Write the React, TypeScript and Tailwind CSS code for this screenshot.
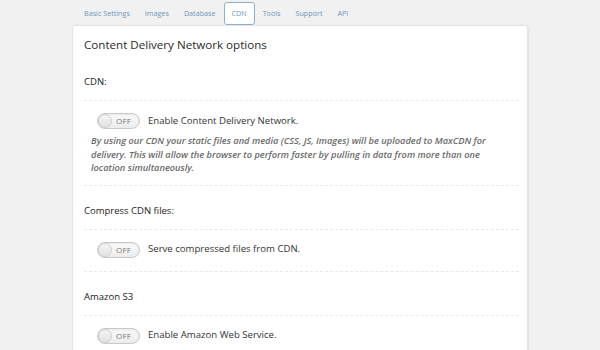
const tabs = ["Basic Settings", "Images", "Database", "CDN", "Tools", "Support", "API"];

function Toggle() {
  return (
    <div className="flex h-[16px] w-[43px] shrink-0 items-center rounded-full border border-[#c9c9c9] bg-gradient-to-b from-[#fafafa] to-[#ececec] shadow-[inset_0_1px_2px_rgba(0,0,0,0.08)]">
      <div className="h-[14px] w-[14px] rounded-full border border-[#cfcfcf] bg-gradient-to-b from-[#f4f4f4] to-[#e2e2e2]" />
      <span className="ml-[4px] text-[8px] leading-none tracking-[0.02em] text-[#777]">OFF</span>
    </div>
  );
}

function Separator() {
  return <div className="border-t border-dashed border-[#e9e9e9]" />;
}

function Header({ children }: { children: string }) {
  return <div className="pb-[10px] pt-[17px] text-[9.5px] leading-[16px] text-[#222]">{children}</div>;
}

function ToggleRow({ label }: { label: string }) {
  return (
    <div className="flex h-[18px] items-center gap-[8px] pl-[13px]">
      <Toggle />
      <span className="text-[9.6px] text-[#333]">{label}</span>
    </div>
  );
}

export default function App() {
  return (
    <div className="h-[350px] w-[600px] overflow-hidden bg-[#f1f1f1] font-['Open_Sans',sans-serif]">
      <div className="flex gap-[1px] pl-[77px] pt-[2px]">
        {tabs.map((t) => (
          <div
            key={t}
            className={`flex h-[23px] items-center rounded-t-[3px] px-[7px] text-[7.2px] text-[#6f96ba] ${
              t === "CDN" ? "rounded-b-[3px] border border-[#8fb0cc] bg-white" : ""
            }`}
          >
            {t}
          </div>
        ))}
      </div>
      <div className="ml-[72px] h-[330px] w-[456px] rounded-t-[3px] border border-[#e3e3e3] bg-white pl-[11px] pr-[8px] shadow-[1px_0_2px_rgba(0,0,0,0.06)]">
        <div className="pb-[2px] pt-[9px] text-[11.6px] leading-[20px] text-[#2a2a2a]">
          Content Delivery Network options
        </div>
        <Header>CDN:</Header>
        <Separator />
        <div className="pb-[10px] pt-[11px]">
          <ToggleRow label="Enable Content Delivery Network." />
          <p className="mt-[4px] max-w-[420px] pl-[7px] text-[9.25px] font-semibold italic leading-[13.5px] text-[#6a6a6a]">
            By using our CDN your static files and media (CSS, JS, Images) will be uploaded to MaxCDN for
            delivery. This will allow the browser to perform faster by pulling in data from more than one
            location simultaneously.
          </p>
        </div>
        <Separator />
        <Header>Compress CDN files:</Header>
        <Separator />
        <div className="pb-[12px] pt-[11px]">
          <ToggleRow label="Serve compressed files from CDN." />
        </div>
        <Separator />
        <Header>Amazon S3</Header>
        <Separator />
        <div className="pb-[12px] pt-[11px]">
          <ToggleRow label="Enable Amazon Web Service." />
        </div>
      </div>
    </div>
  );
}
